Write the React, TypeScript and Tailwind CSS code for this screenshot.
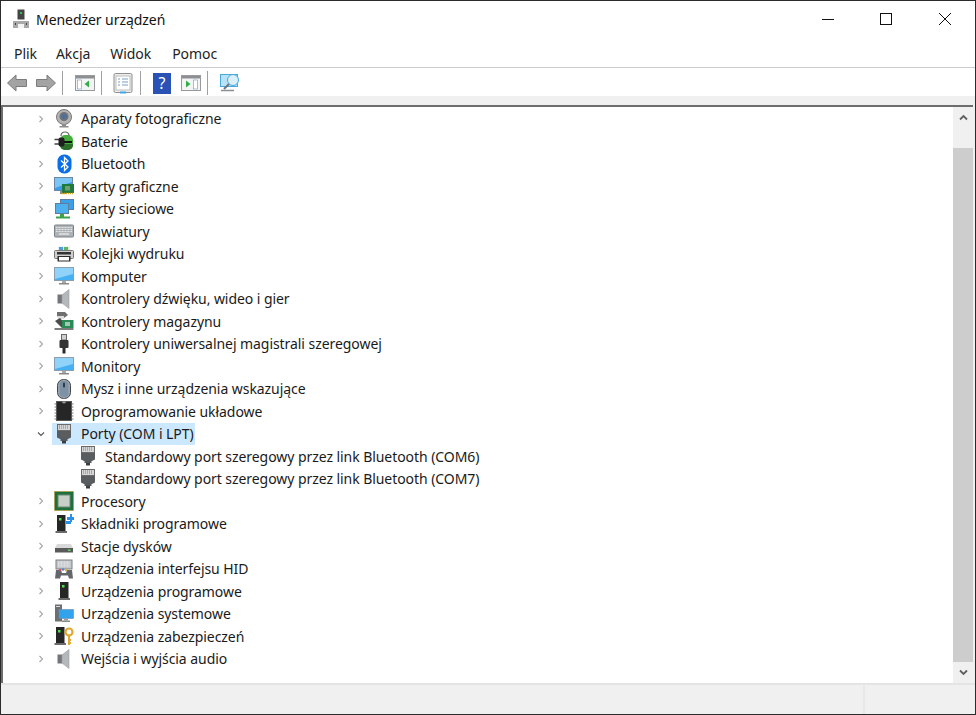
import type { ReactNode } from "react";

const font = "font-['Noto_Sans','Open_Sans',sans-serif]";

function Ico({ children, size = 20 }: { children: ReactNode; size?: number }) {
  return (
    <svg width={size} height={size} viewBox="0 0 20 20" className="shrink-0">
      {children}
    </svg>
  );
}

const Camera = () => (
  <Ico>
    <circle cx="10" cy="8" r="7.5" fill="#b4b4b4" stroke="#777" strokeWidth="1" />
    <circle cx="10" cy="7.5" r="4.5" fill="#6f7378" />
    <circle cx="10" cy="7.5" r="2.5" fill="#4d6f9c" />
    <path d="M8 15h4v2h2.5v1.5h-9V17H8z" fill="#8d8d8d" />
  </Ico>
);

const Battery = () => (
  <Ico>
    <path d="M7 5c0-3 2-4 4-4s4 1 4 4" fill="none" stroke="#666" strokeWidth="1.2" />
    <rect x="6" y="4" width="13" height="15" rx="5" fill="#46ad3f" />
    <path d="M6 13h13v1a5 5 0 01-5 5h-3a5 5 0 01-5-5z" fill="#2a6e2a" />
    <path d="M0.5 8.5h5M0.5 13h5" stroke="#444" strokeWidth="1.5" />
    <rect x="4.5" y="6.5" width="6" height="9" rx="2" fill="#1e1e1e" />
    <path d="M10 11h8" stroke="#111" strokeWidth="2" />
  </Ico>
);

const Bt = () => (
  <Ico>
    <rect x="3.5" y="0.5" width="14" height="19" rx="6.5" fill="#0a6ee8" />
    <path d="M7 6.5l7 6.5-3.5 3.5V3.5L14 7l-7 6.5" fill="none" stroke="#fff" strokeWidth="1.3" />
  </Ico>
);

const Gpu = () => (
  <Ico>
    <rect x="0.5" y="1.5" width="18" height="13" fill="#3d9be8" stroke="#6d86a3" />
    <path d="M1 2h17v4L1 12z" fill="#7cc6f5" />
    <rect x="6" y="15" width="6" height="3" fill="#909090" />
    <rect x="8" y="8" width="12" height="9" fill="#1f7a3d" />
    <rect x="11" y="10" width="5" height="4.5" fill="#70a070" />
    <path d="M8 17.5h12" stroke="#d9a520" strokeWidth="1.5" strokeDasharray="1 1" />
  </Ico>
);

const Net = () => (
  <Ico>
    <rect x="6.5" y="0.5" width="13" height="10" fill="#3ba0ea" stroke="#5b7e9f" />
    <rect x="1.5" y="4.5" width="13" height="10" fill="#4fb0f0" stroke="#5b7e9f" />
    <path d="M2 18.5h14" stroke="#3fa24a" strokeWidth="2" />
    <rect x="6" y="15" width="4" height="3" fill="#3fa24a" />
  </Ico>
);

const Keyboard = () => (
  <Ico>
    <rect x="0.5" y="4" width="19" height="12" rx="1" fill="#aeb3b8" stroke="#7d8286" />
    <path d="M2 6.5h16M2 8.5h16M2 10.5h16" stroke="#e8e8e8" strokeWidth="1" strokeDasharray="1 .5" />
    <path d="M5 13h10" stroke="#eee" strokeWidth="1.2" />
  </Ico>
);

const Printer = () => (
  <Ico>
    <rect x="4" y="2.5" width="12" height="4" fill="#e8e8e8" />
    <path d="M5 3h4v3H5z" fill="#46a0e0" />
    <path d="M10 3h4v3h-4z" fill="#5fb55f" />
    <rect x="0.5" y="6.5" width="19" height="8" rx="1" fill="#cfcfcf" stroke="#777" />
    <rect x="3" y="8" width="14" height="2.5" fill="#333" />
    <rect x="3.5" y="12" width="13" height="5.5" fill="#2c2c2c" />
    <rect x="5" y="13" width="10" height="3.5" fill="#fff" />
  </Ico>
);

const Monitor = () => (
  <Ico>
    <rect x="0.5" y="1.5" width="19" height="13" fill="#46b0f2" stroke="#8a9eb0" />
    <path d="M1 2h18v6L1 13z" fill="#8fd3fa" />
    <rect x="8" y="15" width="4" height="2" fill="#a8a8a8" />
    <rect x="5" y="17" width="10" height="1.5" fill="#8a8a8a" />
  </Ico>
);

const Speaker = () => (
  <Ico>
    <rect x="3.5" y="5.5" width="5" height="9" fill="#72767a" />
    <path d="M8 6l7-5.5v19L8 14z" fill="#b4b8bb" stroke="#9a9ea1" strokeWidth=".6" />
  </Ico>
);

const Storage = () => (
  <Ico>
    <path d="M3 1h8l3 3-4 3H6L3 5z" fill="#6f6f6f" />
    <rect x="4" y="5" width="6" height="3" fill="#dcdcdc" />
    <path d="M1 10l5-3 5 6-3 4z" fill="#4a4a4a" />
    <rect x="8" y="9" width="11.5" height="8" fill="#2c8a56" />
    <rect x="11" y="11" width="5" height="4" fill="#9fc8b0" />
    <path d="M0.5 18h19" stroke="#444" strokeWidth="1.4" />
  </Ico>
);

const Usb = () => (
  <Ico>
    <rect x="7.5" y="0.5" width="5" height="5.5" fill="#cfcfcf" stroke="#666" />
    <rect x="5.5" y="6" width="9" height="8" rx="1" fill="#333" />
    <rect x="8.5" y="14" width="3" height="5.5" fill="#2a2a2a" />
  </Ico>
);

const Mouse = () => (
  <Ico>
    <rect x="3.5" y="0.5" width="13" height="19" rx="6" fill="#9aa8b5" stroke="#444" />
    <rect x="5.5" y="2" width="9" height="16" rx="4" fill="#7e92a6" />
    <rect x="9" y="3.5" width="2" height="5" rx="1" fill="#2e3a45" />
  </Ico>
);

const Chip = () => (
  <Ico>
    <rect x="2.5" y="0.5" width="15" height="19" fill="#262626" stroke="#555" />
    <path d="M0.5 3h2M0.5 6h2M0.5 9h2M0.5 12h2M0.5 15h2M0.5 18h2M17.5 3h2M17.5 6h2M17.5 9h2M17.5 12h2M17.5 15h2M17.5 18h2" stroke="#777" strokeWidth="1" />
    <path d="M8 0.5a2 2 0 004 0z" fill="#999" />
  </Ico>
);

const Port = () => (
  <Ico>
    <rect x="3.5" y="0.5" width="13" height="6" fill="#d6d6d6" stroke="#6a6a6a" />
    <path d="M5 2h1M7 2h1M9 2h1M11 2h1M13 2h1M5 4h1M7 4h1M9 4h1M11 4h1M13 4h1" stroke="#666" strokeWidth=".8" />
    <path d="M3 7h14v6.5l-3 1.5H6l-3-1.5z" fill="#5a5d60" />
    <rect x="6.5" y="15" width="7" height="2" fill="#55585a" />
    <rect x="8" y="17" width="4" height="2.5" fill="#3c3e40" />
  </Ico>
);

const Cpu = () => (
  <Ico>
    <rect x="0.5" y="0.5" width="19" height="19" fill="#1e6f3c" stroke="#b59a3a" strokeDasharray="1 .6" />
    <rect x="4" y="4" width="12" height="12" fill="#c8cfc8" stroke="#6a8a70" />
  </Ico>
);

const Tower = ({ x = 5 }: { x?: number }) => (
  <g>
    <rect x={x} y="1" width="8.5" height="16" fill="#262626" />
    <rect x={x + 2} y="4" width="2.5" height="2.5" fill="#4fe04f" />
    <rect x={x - 1.5} y="17" width="11.5" height="2" fill="#6a6a6a" />
  </g>
);

const Software = () => (
  <Ico>
    <Tower x={3} />
    <path d="M13 3h3V0h2v3h2v3h-2v2h-2V6h-3z" fill="#2b8fe6" />
    <rect x="12" y="7" width="5" height="3" fill="#2b8fe6" />
  </Ico>
);

const Disk = () => (
  <Ico>
    <path d="M3 8h14l2 4v4H1v-4z" fill="#d9d9d9" />
    <rect x="1" y="12" width="18" height="4.5" fill="#5a5a5a" />
    <rect x="14" y="13.5" width="2.5" height="1.5" fill="#5fdc5f" />
  </Ico>
);

const Hid = () => (
  <Ico>
    <rect x="2" y="1" width="16" height="9" fill="#c3c7cb" stroke="#7d8286" />
    <path d="M4 3h12M4 5h12M4 7h12" stroke="#f0f0f0" strokeDasharray="1 .5" />
    <path d="M1 19.5l1-8.5h5l1 3h4l1-3h5l1 8.5h-4l-1-3H7l-1 3z" fill="#63676b" />
    <circle cx="6" cy="11" r="1.3" fill="#e05050" />
    <circle cx="9" cy="10.5" r="1.3" fill="#4090e0" />
    <circle cx="12" cy="11" r="1.3" fill="#e0b040" />
  </Ico>
);

const Programs = () => (
  <Ico>
    <Tower x={6} />
  </Ico>
);

const System = () => (
  <Ico>
    <rect x="1" y="0.5" width="7" height="17" fill="#6b6f73" />
    <rect x="2" y="2" width="4" height="1" fill="#d8d8d8" />
    <rect x="5" y="5.5" width="14.5" height="9" fill="#31a2ec" stroke="#6b8aa6" strokeWidth=".6" />
    <rect x="10" y="15" width="4" height="1.5" fill="#9a9a9a" />
    <rect x="8" y="16.5" width="8" height="1.5" fill="#8a8a8a" />
  </Ico>
);

const Secure = () => (
  <Ico>
    <Tower x={2} />
    <circle cx="15" cy="6" r="3.5" fill="none" stroke="#e0a92d" strokeWidth="2.2" />
    <path d="M15 9v10M15 14h2M15 17h2" stroke="#e0a92d" strokeWidth="2" />
  </Ico>
);

const rows: { label: string; icon: ReactNode }[] = [
  { label: "Aparaty fotograficzne", icon: <Camera /> },
  { label: "Baterie", icon: <Battery /> },
  { label: "Bluetooth", icon: <Bt /> },
  { label: "Karty graficzne", icon: <Gpu /> },
  { label: "Karty sieciowe", icon: <Net /> },
  { label: "Klawiatury", icon: <Keyboard /> },
  { label: "Kolejki wydruku", icon: <Printer /> },
  { label: "Komputer", icon: <Monitor /> },
  { label: "Kontrolery dźwięku, wideo i gier", icon: <Speaker /> },
  { label: "Kontrolery magazynu", icon: <Storage /> },
  { label: "Kontrolery uniwersalnej magistrali szeregowej", icon: <Usb /> },
  { label: "Monitory", icon: <Monitor /> },
  { label: "Mysz i inne urządzenia wskazujące", icon: <Mouse /> },
  { label: "Oprogramowanie układowe", icon: <Chip /> },
];

const rowsAfter: { label: string; icon: ReactNode }[] = [
  { label: "Procesory", icon: <Cpu /> },
  { label: "Składniki programowe", icon: <Software /> },
  { label: "Stacje dysków", icon: <Disk /> },
  { label: "Urządzenia interfejsu HID", icon: <Hid /> },
  { label: "Urządzenia programowe", icon: <Programs /> },
  { label: "Urządzenia systemowe", icon: <System /> },
  { label: "Urządzenia zabezpieczeń", icon: <Secure /> },
  { label: "Wejścia i wyjścia audio", icon: <Speaker /> },
];

function Chevron({ open }: { open?: boolean }) {
  return (
    <svg width="18" height="10" viewBox="0 0 18 10" className="shrink-0">
      <path
        d={open ? "M4 3.5L7 6.5L10 3.5" : "M5.5 2L8.5 5L5.5 8"}
        fill="none"
        stroke={open ? "#555" : "#a6a6a6"}
        strokeWidth="1.1"
      />
    </svg>
  );
}

function Row({ label, icon }: { label: string; icon: ReactNode }) {
  return (
    <div className="flex h-[22.5px] items-center pl-[31px]">
      <Chevron />
      <div className="flex items-center gap-[7px] pl-[2px]">
        {icon}
        <span>{label}</span>
      </div>
    </div>
  );
}

function Sep() {
  return <div className="h-[24px] w-px bg-[#a0a0a0]" />;
}

function Win({ children }: { children: ReactNode }) {
  return (
    <svg width="20" height="20" viewBox="0 0 20 20" className="shrink-0">
      <rect x="0.5" y="2.5" width="19" height="15" fill="#f4f4f4" stroke="#9a9a9a" />
      <rect x="1" y="3" width="18" height="2.5" fill="#8c9094" />
      {children}
    </svg>
  );
}

function Toolbar() {
  return (
    <div className="flex h-[29px] items-center border-t border-[#c9ccd1] bg-white pl-[6px] pt-[2px]">
      <svg width="20" height="18" viewBox="0 0 20 18" className="mr-[9px]">
        <path d="M9 1L0.5 9L9 17V12.5H19.5V5.5H9z" fill="#a3a3a3" stroke="#7c7c7c" />
      </svg>
      <svg width="20" height="18" viewBox="0 0 20 18" className="mr-[6px]">
        <path d="M11 1L19.5 9L11 17V12.5H0.5V5.5H11z" fill="#a3a3a3" stroke="#7c7c7c" />
      </svg>
      <Sep />
      <div className="ml-[12px] mr-[6px]">
        <Win>
          <rect x="2.5" y="7" width="4" height="9" fill="#fff" stroke="#7fa6d0" strokeWidth=".7" />
          <path d="M14 7.5v7L9.5 11z" fill="#2fae4a" />
        </Win>
      </div>
      <Sep />
      <svg width="20" height="21" viewBox="0 0 20 21" className="ml-[11px] mr-[7px]">
        <rect x="1" y="0.5" width="18" height="19" rx="1.5" fill="#ececec" stroke="#8f8f8f" />
        <rect x="3" y="3" width="14" height="14" fill="#fff" stroke="#bdbdbd" />
        <path d="M5 6h2M9 6h6M5 9h2M9 9h6M5 12h2M9 12h6" stroke="#7a9cc0" />
        <rect x="7" y="18.5" width="6" height="2" fill="#3da7ea" />
      </svg>
      <Sep />
      <div className="ml-[12px] mr-[10px] flex h-[21px] w-[18px] items-center justify-center bg-[#2a52b5] text-[16px] leading-none text-white">
        ?
      </div>
      <Win>
        <path d="M5 7.5v7L9.5 11z" fill="#2fae4a" />
        <rect x="12.5" y="7" width="4" height="9" fill="#fff" stroke="#7fa6d0" strokeWidth=".7" />
      </Win>
      <div className="ml-[6px] mr-[12px]">
        <Sep />
      </div>
      <svg width="21" height="20" viewBox="0 0 21 20">
        <rect x="0.5" y="1.5" width="17" height="12" fill="#b9e2f7" stroke="#49a8dc" />
        <circle cx="13" cy="7" r="5.5" fill="#d9effa" stroke="#49a8dc" />
        <path d="M9 11L4 16" stroke="#6b7680" strokeWidth="2" />
        <path d="M1 17.5h13" stroke="#8a8f94" strokeWidth="1.5" />
      </svg>
    </div>
  );
}

export default function App() {
  return (
    <div className={`${font} flex h-[715px] w-[976px] flex-col overflow-hidden border border-[#2b2b2b] bg-white text-[14px] tracking-[-0.06px] text-[#1a1a1a]`}>
      <div className="flex h-[36px] items-center bg-white pl-[11px]">
        <svg width="18" height="20" viewBox="0 0 18 20">
          <rect x="5.5" y="0.5" width="7" height="10" fill="#444" />
          <rect x="8" y="3" width="2" height="2" fill="#39c04a" />
          <path d="M1 12h16v7H1z" fill="#a8a8a8" />
          <path d="M6 15h6v4H6z" fill="#f4f4f4" />
          <path d="M3 14h1v2H3zM14 14h1v2h-1z" fill="#444" />
        </svg>
        <span className="ml-[6px] text-[#111]">Menedżer urządzeń</span>
        <div className="ml-auto flex items-center">
          <svg width="12" height="12" viewBox="0 0 12 12" className="mr-[46px]">
            <path d="M0 6.5h12" stroke="#111" />
          </svg>
          <svg width="12" height="12" viewBox="0 0 12 12" className="mr-[47px]">
            <rect x="0.5" y="0.5" width="11" height="11" fill="none" stroke="#111" />
          </svg>
          <svg width="12" height="12" viewBox="0 0 12 12" className="mr-[24px]">
            <path d="M0 0L12 12M12 0L0 12" stroke="#111" />
          </svg>
        </div>
      </div>
      <div className="flex h-[30px] items-center pl-[13px] pt-[3px] text-[#222]">
        <span>Plik</span>
        <span className="ml-[19px]">Akcja</span>
        <span className="ml-[20px]">Widok</span>
        <span className="ml-[21px]">Pomoc</span>
      </div>
      <Toolbar />
      <div className="h-[9px] bg-[#f0f0f0]" />
      <div className="flex min-h-0 flex-1 bg-[#f0f0f0] pr-[2px]">
        <div className="flex min-w-0 flex-1 border-l-2 border-t-2 border-[#6d6d6d] bg-white">
          <div className="min-w-0 flex-1 pt-[0.5px]">
            {rows.map((r) => (
              <Row key={r.label} label={r.label} icon={r.icon} />
            ))}
            <div className="flex h-[22.5px] items-center pl-[31px]">
              <Chevron open />
              <div className="flex h-[22.5px] items-center gap-[7px] bg-[#cce8ff] pl-[2px] pr-[1px]">
                <Port />
                <span>Porty (COM i LPT)</span>
              </div>
            </div>
            {["COM6", "COM7"].map((c) => (
              <div key={c} className="flex h-[22.5px] items-center gap-[7px] pl-[75px]">
                <Port />
                <span>Standardowy port szeregowy przez link Bluetooth ({c})</span>
              </div>
            ))}
            {rowsAfter.map((r) => (
              <Row key={r.label} label={r.label} icon={r.icon} />
            ))}
          </div>
          <div className="flex w-[20px] flex-col bg-[#f0f0f0]">
            <div className="flex h-[41px] items-start justify-center pt-[7px]">
              <svg width="9" height="7" viewBox="0 0 9 7">
                <path d="M1 5.5L4.5 2L8 5.5" fill="none" stroke="#606060" strokeWidth="1.8" />
              </svg>
            </div>
            <div className="flex-1 bg-[#cdcdcd]" />
            <div className="flex h-[21px] items-center justify-center">
              <svg width="9" height="7" viewBox="0 0 9 7">
                <path d="M1 1.5L4.5 5L8 1.5" fill="none" stroke="#606060" strokeWidth="1.8" />
              </svg>
            </div>
          </div>
        </div>
      </div>
      <div className="flex h-[31px] border-t-2 border-[#e4e4e4] bg-[#f0f0f0]">
        <div className="w-[864px] border-r-2 border-[#e8e8e8]" />
        <div className="flex-1" />
      </div>
    </div>
  );
}
